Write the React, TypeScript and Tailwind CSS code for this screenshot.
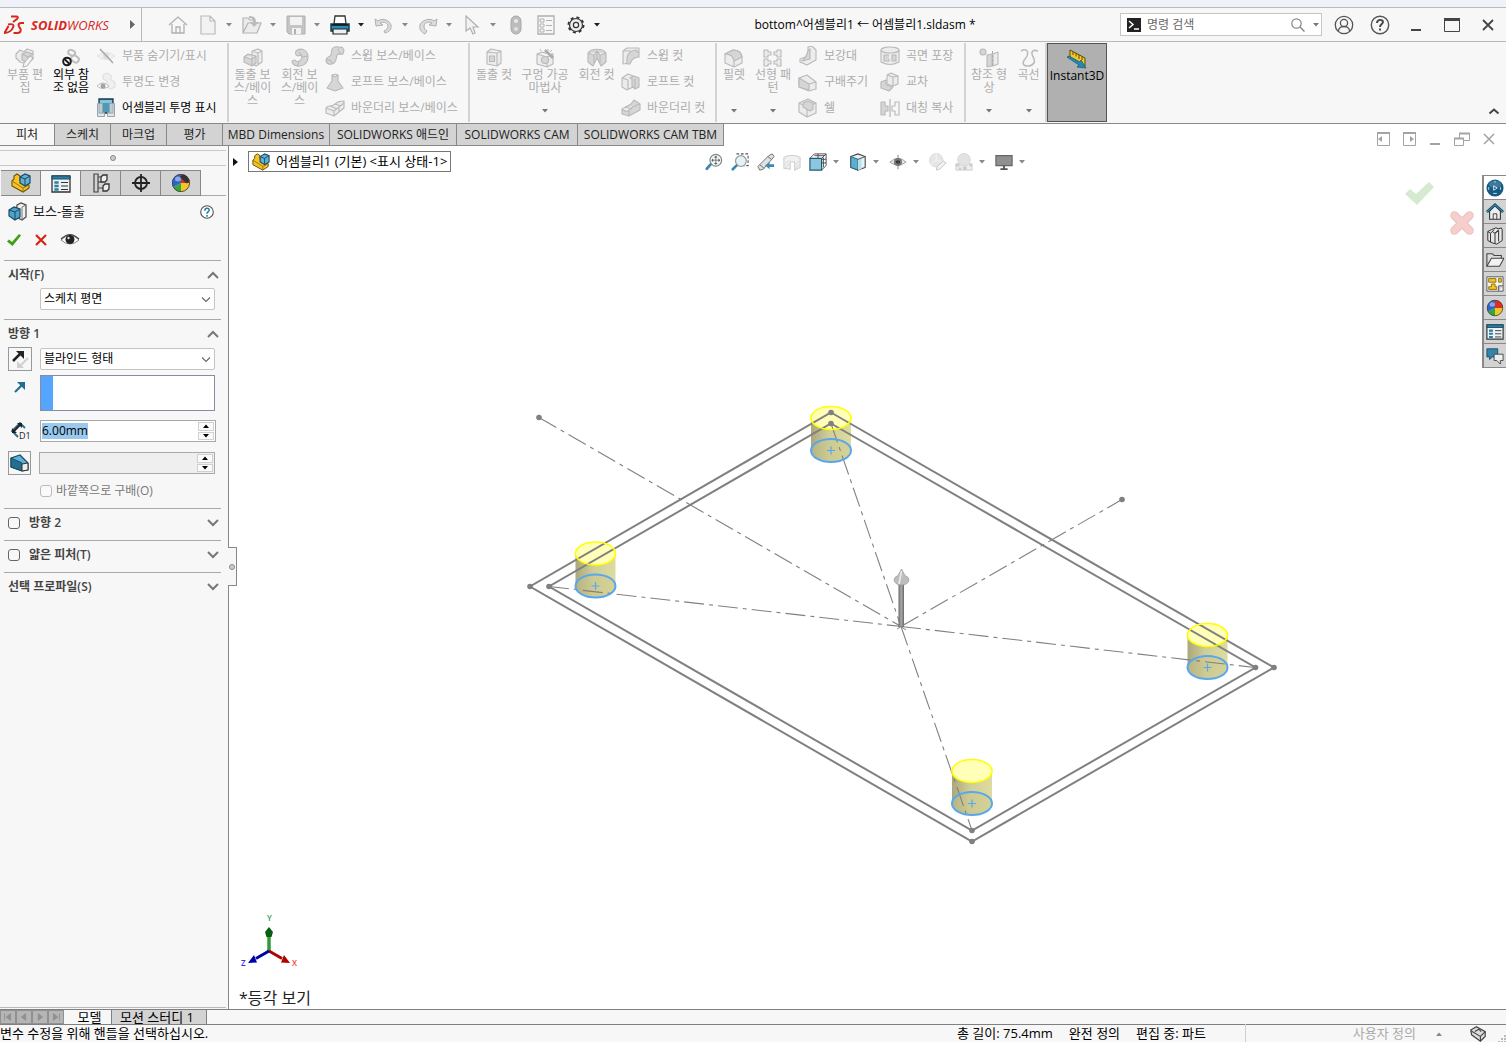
import React, { useEffect, useRef, useState } from "react";

type IconProps = { children: React.ReactNode; className?: string; box?: string };

function Icon({ children, className = "h-5 w-5", box = "0 0 20 20" }: IconProps) {
  return (
    <svg viewBox={box} className={`shrink-0 ${className}`} fill="none" aria-hidden="true">
      {children}
    </svg>
  );
}

function Caret({ className = "text-[#777]" }: { className?: string }) {
  return (
    <svg viewBox="0 0 6 4" className={`h-1 w-1.5 shrink-0 ${className}`} aria-hidden="true">
      <path d="M0 0h6L3 3.6z" fill="currentColor" />
    </svg>
  );
}

// Disabled ribbon icons are all drawn in the same two greys
const off = { stroke: "#b9b9b9", strokeWidth: 1.1, fill: "#ececec", strokeLinejoin: "round" as const };
const offDark = { ...off, fill: "#d6d6d6" };

const ribbon = {
  editPart: (
    <>
      <path {...off} d="M1 6l4-4 4 2 3-3 6 2v8l-6 5-7-2-4-4z" />
      <path {...offDark} d="M7 6l5-2 6 2-5 3zM7 6v6l6 3V9" />
      <path {...off} fill="#f7f7f7" d="M15 8l3 2-6 8-4 1 1-4z" />
    </>
  ),
  noRefs: (
    <>
      <g stroke="#bdbdbd" strokeWidth="2">
        <rect x="7" y="2" width="7" height="5" rx="2.5" transform="rotate(25 10 5)" />
        <rect x="10" y="8" width="8" height="6" rx="3" transform="rotate(35 14 11)" />
      </g>
      <circle cx="6" cy="13.500" r="3.800" stroke="#1d1d1d" strokeWidth="2" fill="#fff" />
      <path d="M3.500 11l5 5" stroke="#1d1d1d" strokeWidth="2" />
    </>
  ),
  hideShow: (
    <>
      <path d="M1 10q9-7 18 0-9 7-18 0" stroke="#e2e2e2" fill="#f1f1f1" />
      <circle cx="10" cy="10" r="3" fill="#dedede" />
      <path d="M4 3l13 14" stroke="#a8a8a8" strokeWidth="1.500" />
    </>
  ),
  transparency: (
    <>
      <path d="M7 3l4-2 4 2v5l4 2v5l-4 2-4-2V9L7 7z" stroke="#dcdcdc" fill="#efefef" />
      <path d="M1 14q6-6 12 0-6 5-12 0" stroke="#bcbcbc" fill="#fff" />
      <circle cx="7" cy="14" r="2.500" fill="#a3a3a3" />
    </>
  ),
  asmTransparency: (
    <>
      <path d="M3 1h14v14H3z" fill="#4d9ab8" stroke="#173c4d" strokeWidth="1.300" />
      <path d="M4 2h12v3H4z" fill="#86c3dc" />
      <path d="M1.500 5.500h5v9h2v4h-7zM18.500 5.500h-5v9h-2v4h7z" fill="#d9dfe2" fillOpacity=".75" stroke="#9aa3a8" />
    </>
  ),
  bossExtrude: (
    <>
      <path {...off} d="M9 3l6-2 4 2v11l-6 4-4-3zM15 5v12M9 3l6 2 4-2" />
      <path {...offDark} d="M1 9l4-3 8 2v7l-4 3-8-4zM1 9l8 2 4-3M9 11v7" />
    </>
  ),
  bossRevolve: (
    <path {...offDark} d="M6 3c5-4 12-1 12 6 0 6-5 10-11 9-4-1-5-3-5-5l3-1c2 3 6 1 7-2 0-3-3-3-4-2-2 0-3-2-2-5zM12 9l6-1M9 4l3 4M7 18l2-4" />
  ),
  sweep: (
    <path {...offDark} d="M1 14c0-3 4-3 5-5s-1-7 4-8c3-1 4 1 7 0l2 3-1 4c-4 1-5-1-6 1s0 6-3 8-8 2-8-3zM1 14c2-1 5 0 6 3M14 2c-1 2 0 4 2 6" />
  ),
  loft: <path {...offDark} d="M7 3c2-1 4-1 6 0v6l5 7-8 3-8-3 5-7zM7 3c2 2 4 2 6 0" />,
  boundary: (
    <>
      <path {...off} d="M1 10c2-4 5 0 9-4s5-2 9-3v7l-10 8-8-3z" />
      <path {...off} d="M1 10l8 3 10-8M9 13v5M5 8l7 3M10 6l6 2M14 10v4" />
    </>
  ),
  cutExtrude: (
    <>
      <path {...off} d="M3 4l4-3 10 2v12l-4 3-10-2zM3 4l10 1 4-2M13 5v13" />
      <path {...offDark} d="M5.500 8h5v5.500h-5z" />
    </>
  ),
  holeWizard: (
    <>
      <path {...off} d="M2 6l5-2 11 3v9l-6 3-10-3zM2 6l10 3 6-2M12 9v10" />
      <circle {...offDark} cx="10" cy="12" r="3.500" />
      <path d="M10 2l8 8" stroke="#ababab" strokeWidth="2.500" />
      <path d="M5 1l1 2M13 1v3M17 2l-2 2M19 6h-3" stroke="#bbb" />
    </>
  ),
  cutRevolve: (
    <path {...offDark} d="M1 5c3-5 15-5 18 0v9l-5 4-4-8-4 8-5-4zM1 5l6 2 3-4 3 4 6-2M7 7v10M13 7v10M10 3v7" />
  ),
  cutSweep: (
    <>
      <path {...off} d="M2 5l4-3h12v4l-8 6-1 5-7 1z" />
      <path {...offDark} d="M6 18V12q1-7 9-8l3 3v4q-7 0-9 7zM2 5h8" />
    </>
  ),
  cutLoft: (
    <>
      <path {...off} d="M1 6l6-4 5 2v11l-6 3-5-3zM1 6l6 2v10" />
      <path {...offDark} d="M9 6l4-2 5 2v9l-4 2-3-3V7z" />
      <path {...off} d="M14 7v10" />
    </>
  ),
  cutBoundary: (
    <>
      <path {...offDark} d="M1 11l9-5 3-4 6 4v6L8 18l-7-2z" />
      <path {...off} d="M1 11q5 4 7 1t11-6M8 12v6M4 9l7 2" />
    </>
  ),
  fillet: (
    <>
      <path {...off} d="M1 6l8-4q8 0 9 7v6l-8 4-9-4z" />
      <path {...offDark} d="M1 6l8-4q8 0 9 7l-8 4q-1-7-9-7z" />
      <path {...off} d="M10 13v6" />
    </>
  ),
  linearPattern: (
    <path
      {...off}
      d="M1 2h4v2h3v3H5v2H1zM18 2h-4v2h-3v3h3v2h4zM1 11h4v2h3v3H5v2H1zM18 11h-4v2h-3v3h3v2h4z"
    />
  ),
  rib: (
    <>
      <path {...off} d="M10 1l4-1 4 4v10l-9 5-7-3v-3l8-3z" />
      <path {...offDark} d="M12 3v10l-8 2q4-3 6-10z" />
    </>
  ),
  draft: (
    <>
      <path {...off} d="M1 6l8-3 9 7v7l-7 2-10-4z" />
      <path {...offDark} d="M1 6l10 6v6L1 15z" />
      <path {...off} d="M11 12l7-2" />
    </>
  ),
  shell: (
    <>
      <path {...off} d="M1 5l9-4 8 4v10l-9 4-8-5zM1 5l8 4 9-4M9 9v10" />
      <path {...offDark} d="M5 5l5-2 5 2v6l-3 2-7-4z" />
    </>
  ),
  wrap: (
    <>
      <path {...off} d="M1 4v12q9 5 18 0V4" />
      <ellipse {...off} cx="10" cy="4" rx="9" ry="3" />
      <path {...offDark} d="M9 9H4v6h5v-2M12 9h4v6h-4z" />
    </>
  ),
  intersect: (
    <>
      <path {...off} d="M7 3l4-2 7 3v8l-5 2-6-2z" />
      <path {...offDark} d="M1 10l5-2v5l7 2-4 4-8-3z" />
      <path {...off} d="M7 3l6 2v9M13 5l5-1" />
    </>
  ),
  mirror: (
    <>
      <path {...offDark} d="M1 4h4v4h3v5H5v4H1z" />
      <path {...off} fill="none" d="M19 4h-4v4h-3v5h3v4h4z" />
      <path d="M10 1v18" stroke="#b4b4b4" strokeWidth="1.200" />
    </>
  ),
  refGeometry: (
    <>
      <circle {...offDark} cx="4" cy="4" r="3" />
      <path {...offDark} d="M8 7l5-1v12l-5 1z" />
      <path {...off} d="M14 6l5-2v12l-5 2z" />
      <path d="M13.500 3v16" stroke="#aaa" strokeDasharray="3 1" />
    </>
  ),
  curve: (
    <path d="M2 3c5-3 8 0 6 5-2 4-6 6-3 9 3 2 8 1 10-2 2-4-3-7-2-11 1-2 3-2 6-1" stroke="#bbb" strokeWidth="1.600" />
  ),
  instant3d: (
    <>
      <path d="M3 1l15 8v8L3 8z" fill="#f6c928" stroke="#5a4708" />
      <path d="M6 3v3M9 4.500v3M12 6v4M15 8v3" stroke="#5a4708" />
      <path d="M0 8l2-1 11 6 1-2 5 8-9-1 2-2z" fill="#2389b5" stroke="#165c7b" strokeWidth=".8" />
    </>
  ),
};

type RibbonIcon = keyof typeof ribbon;

type BigButtonProps = { icon: RibbonIcon; lines: string[]; width: string; on?: boolean; menu?: boolean };

function BigButton({ icon, lines, width, on, menu }: BigButtonProps) {
  return (
    <button type="button" className={`flex shrink-0 flex-col items-center pt-1.5 pb-2.5 ${width}`}>
      <Icon>{ribbon[icon]}</Icon>
      <span className={`leading-[13px] whitespace-nowrap ${on ? "text-black" : "text-[#adadad]"}`}>
        {lines.map((line, i) => (
          <span key={i} className="block">
            {line}
          </span>
        ))}
      </span>
      {menu && <Caret className="mt-auto text-[#777]" />}
    </button>
  );
}

type Row = { icon: RibbonIcon; label: string; on?: boolean };

function RowList({ rows, width }: { rows: Row[]; width: string }) {
  return (
    <div className={`flex shrink-0 flex-col pt-px ${width}`}>
      {rows.map((row) => (
        <button
          key={row.label}
          type="button"
          className={`flex h-[26px] items-center gap-1.5 whitespace-nowrap ${
            row.on ? "text-black" : "text-[#adadad]"
          }`}
        >
          <Icon>{ribbon[row.icon]}</Icon>
          {row.label}
        </button>
      ))}
    </div>
  );
}

function Divider() {
  return <div className="my-px w-0.5 shrink-0 bg-[#d3d3d3]" />;
}

const quick = {
  home: <path d="M1 10l9-8 9 8M4 9v9h12V9M8 18v-6h4v6" stroke="#b0b0b0" strokeWidth="1.300" />,
  fresh: <path d="M3 1h9l5 5v13H3zM12 1v5h5" stroke="#b9b9b9" fill="#f2f2f2" strokeWidth="1.200" />,
  open: (
    <>
      <path d="M1 18V3h5l2 2h4M1 18L6 8h13l-4 10z" stroke="#b4b4b4" fill="#ececec" strokeWidth="1.200" />
      <path d="M7 1c5 0 7 2 7 6h3l-5 5-4-5h3c0-3-1-4-4-4z" fill="#bcbcbc" />
    </>
  ),
  save: (
    <>
      <path d="M1 1h18v18H3l-2-2z" fill="#c4c4c4" stroke="#b0b0b0" />
      <path d="M4 2h12v8H4zM6 13h9v6H6z" fill="#f2f2f2" />
      <path d="M8 14h2v5H8z" fill="#b0b0b0" />
    </>
  ),
  print: (
    <>
      <path d="M5 1h10l1 8H4z" fill="#fff" stroke="#333" strokeWidth="1.300" />
      <path d="M1 9h18v7H1z" fill="#2c8db3" stroke="#173c4d" strokeWidth="1.500" />
      <path d="M3 14h14v5H3z" fill="#e9f1f4" stroke="#222" strokeWidth="1.200" />
      <path d="M2 10h16" stroke="#111" strokeWidth="1.500" />
    </>
  ),
  undo: <path d="M1 4l1 7 7-1-3-2c4-2 8 0 8 3s-2 4-4 5l1 2c4-1 7-4 6-8S9 2 4 6z" stroke="#b0b0b0" fill="#dcdcdc" />,
  redo: <path d="M19 4l-1 7-7-1 3-2c-4-2-8 0-8 3s1 4 3 5l-2 3c-4-2-6-5-5-9S11 2 16 6z" stroke="#b0b0b0" fill="#dcdcdc" />,
  select: <path d="M4 1v15l4-3 3 6 2-1-2-6h5z" stroke="#b0b0b0" fill="#f2f2f2" strokeWidth="1.200" />,
  rebuild: (
    <>
      <rect x="5" y="1" width="10" height="18" rx="5" fill="#bdbdbd" stroke="#a9a9a9" />
      <circle cx="10" cy="6" r="2" fill="#e9e9e9" />
      <circle cx="10" cy="14" r="2" fill="#e0e0e0" />
    </>
  ),
  fileProps: (
    <>
      <path d="M2 1h16v18H2z" stroke="#b0b0b0" strokeWidth="1.300" />
      <path d="M4 4h4v3H4zM4 9h4v3H4zM4 14h4v3H4zM10 5.500h6M10 10.500h6M10 15.500h6" stroke="#b0b0b0" />
    </>
  ),
  options: (
    <>
      <circle cx="10" cy="10" r="7.600" stroke="#333" strokeWidth="1.800" strokeDasharray="3 3" />
      <circle cx="10" cy="10" r="6.500" stroke="#333" strokeWidth="1.200" fill="#ececec" />
      <circle cx="10" cy="10" r="2.600" stroke="#333" strokeWidth="1.200" fill="#f7f7f7" />
    </>
  ),
};

function Quick({ name, label, menu, dark }: { name: keyof typeof quick; label: string; menu?: boolean; dark?: boolean }) {
  return (
    <button type="button" aria-label={label} className={`flex shrink-0 items-center ${menu ? "w-11 gap-2" : "w-5"}`}>
      <Icon>{quick[name]}</Icon>
      {menu && <Caret className={dark ? "text-[#222]" : "text-[#888]"} />}
    </button>
  );
}

function TitleBar() {
  return (
    <header className="flex h-[34px] items-stretch border-b border-[#b9b9b9]">
      <div className="flex w-[142px] shrink-0 items-center border-r border-[#b9b9b9] pl-1">
        <Icon className="h-5 w-[21px]" box="0 0 21 20">
          <path
            d="M7 1.500h5q3 0 1 2.500l-4 3M4 9.500q7-1.500 5 3-2 5-8.500 5.500l4-7M20 8h-2.500q-4 0-2.500 3.500l1.500 2.500q1 4-3.500 4H9.500"
            stroke="#d9261c"
            strokeWidth="2"
          />
        </Icon>
        <span className="ml-1.5 text-[13px] leading-5 text-[#d9261c] italic">
          <b>SOLID</b>WORKS
        </span>
        <button type="button" aria-label="메뉴" className="mr-1.5 ml-auto">
          <svg viewBox="0 0 5 9" className="h-[9px] w-[5px]">
            <path d="M0 0l5 4.500L0 9z" fill="#666" />
          </svg>
        </button>
      </div>
      <div className="flex shrink-0 items-center pl-[26px]">
        <Quick name="home" label="홈" />
        <div className="w-2.5" />
        <Quick name="fresh" label="새로 만들기" menu />
        <Quick name="open" label="열기" menu />
        <Quick name="save" label="저장" menu />
        <Quick name="print" label="인쇄" menu dark />
        <Quick name="undo" label="실행 취소" menu />
        <Quick name="redo" label="다시 실행" menu />
        <Quick name="select" label="선택" menu />
        <div className="flex gap-2.5">
          <Quick name="rebuild" label="재생성" />
          <Quick name="fileProps" label="파일 속성" />
          <Quick name="options" label="옵션" menu dark />
        </div>
      </div>
      <h1 className="flex-1 self-center text-center text-[12px] whitespace-nowrap text-black">
        bottom^어셈블리1 ← 어셈블리1.sldasm *
      </h1>
      <div className="flex w-[202px] items-center self-center border border-[#c6c6c6] bg-white px-1.5">
        <Icon className="h-3.5 w-3.5" box="0 0 14 14">
          <path d="M0 0h14v14H0z" fill="#222" />
          <path d="M2 3l4 3.500L2 10M7 11h5" stroke="#fff" strokeWidth="1.500" />
        </Icon>
        <input
          aria-label="명령 검색"
          placeholder="명령 검색"
          className="h-[21px] min-w-0 flex-1 px-1.5 text-[12px] outline-none placeholder:text-[#666]"
        />
        <Icon className="h-3.5 w-3.5" box="0 0 14 14">
          <circle cx="5.500" cy="5.500" r="4.700" stroke="#888" strokeWidth="1.200" />
          <path d="M9 9l4.500 4.500" stroke="#888" strokeWidth="1.500" />
        </Icon>
        <Caret className="ml-2 -mr-1 text-[#777]" />
      </div>
      <div className="flex items-center gap-4 pr-2 pl-3">
        <button type="button" aria-label="로그인">
          <Icon>
            <g stroke="#555" strokeWidth="1.300">
              <circle cx="10" cy="10" r="8.700" />
              <circle cx="10" cy="8" r="3.600" />
              <path d="M4.500 16c0-6 11-6 11 0" />
            </g>
          </Icon>
        </button>
        <button type="button" aria-label="도움말">
          <Icon>
            <circle cx="10" cy="10" r="8.700" stroke="#555" strokeWidth="1.400" />
            <path d="M7 8c0-4 6-4 6-1 0 2-3 2-3 5M10 13.500v2" stroke="#444" strokeWidth="1.900" />
          </Icon>
        </button>
        <button type="button" aria-label="최소화">
          <Icon>
            <path d="M5 15h10" stroke="#444" strokeWidth="2" />
          </Icon>
        </button>
        <button type="button" aria-label="최대화">
          <Icon>
            <path d="M2.500 3.500h15v13h-15z" stroke="#444" />
            <path d="M2 4.500h16" stroke="#444" strokeWidth="3" />
          </Icon>
        </button>
        <button type="button" aria-label="닫기">
          <Icon>
            <path d="M5 5l10 10M15 5L5 15" stroke="#444" strokeWidth="1.800" />
          </Icon>
        </button>
      </div>
    </header>
  );
}

function Ribbon() {
  return (
    <div className="flex h-[82px] items-stretch border-b border-[#888] text-[12px]">
      <BigButton icon="editPart" lines={["부품 편", "집"]} width="w-[50px]" />
      <BigButton icon="noRefs" lines={["외부 참", "조 없음"]} width="w-[42px]" on />
      <RowList
        width="w-[135px] pl-1"
        rows={[
          { icon: "hideShow", label: "부품 숨기기/표시" },
          { icon: "transparency", label: "투명도 변경" },
          { icon: "asmTransparency", label: "어셈블리 투명 표시", on: true },
        ]}
      />
      <Divider />
      <BigButton icon="bossExtrude" lines={["돌출 보", "스/베이", "스"]} width="w-[47px]" />
      <BigButton icon="bossRevolve" lines={["회전 보", "스/베이", "스"]} width="w-[47px]" />
      <RowList
        width="w-[145px] pl-0.5"
        rows={[
          { icon: "sweep", label: "스윕 보스/베이스" },
          { icon: "loft", label: "로프트 보스/베이스" },
          { icon: "boundary", label: "바운더리 보스/베이스" },
        ]}
      />
      <Divider />
      <BigButton icon="cutExtrude" lines={["돌출 컷"]} width="w-12" />
      <BigButton icon="holeWizard" lines={["구멍 가공", "마법사"]} width="w-[54px]" menu />
      <BigButton icon="cutRevolve" lines={["회전 컷"]} width="w-[49px]" />
      <RowList
        width="w-[94px]"
        rows={[
          { icon: "cutSweep", label: "스윕 컷" },
          { icon: "cutLoft", label: "로프트 컷" },
          { icon: "cutBoundary", label: "바운더리 컷" },
        ]}
      />
      <Divider />
      <BigButton icon="fillet" lines={["필렛"]} width="w-[34px]" menu />
      <BigButton icon="linearPattern" lines={["선형 패", "턴"]} width="w-[44px]" menu />
      <RowList
        width="w-[85px] pl-[3px]"
        rows={[
          { icon: "rib", label: "보강대" },
          { icon: "draft", label: "구배주기" },
          { icon: "shell", label: "쉘" },
        ]}
      />
      <RowList
        width="w-[84px]"
        rows={[
          { icon: "wrap", label: "곡면 포장" },
          { icon: "intersect", label: "교차" },
          { icon: "mirror", label: "대칭 복사" },
        ]}
      />
      <Divider />
      <BigButton icon="refGeometry" lines={["참조 형", "상"]} width="w-[46px]" menu />
      <BigButton icon="curve" lines={["곡선"]} width="w-[33px]" menu />
      <Divider />
      <div className="my-px flex bg-[#b0b0b0] ring-1 ring-[#555] ring-inset">
        <BigButton icon="instant3d" lines={["Instant3D"]} width="w-[60px]" on />
      </div>
      <button type="button" aria-label="리본 접기" className="mr-1.5 mb-2 ml-auto self-end">
        <Icon className="h-2 w-3" box="0 0 12 8">
          <path d="M1.500 6.500L6 2.500l4.500 4" stroke="#444" strokeWidth="2" />
        </Icon>
      </button>
    </div>
  );
}

const commandTabs = [
  { label: "피처", width: "w-[55px]" },
  { label: "스케치", width: "w-14" },
  { label: "마크업", width: "w-14" },
  { label: "평가", width: "w-14" },
  { label: "MBD Dimensions", width: "w-[107px]" },
  { label: "SOLIDWORKS 애드인", width: "w-[127px]" },
  { label: "SOLIDWORKS CAM", width: "w-[121px]" },
  { label: "SOLIDWORKS CAM TBM", width: "w-[146px]" },
];

function CommandTabs() {
  return (
    <div className="flex h-[22px] justify-between">
      <nav className="flex text-[12px] leading-[21px] whitespace-nowrap text-[#222]">
        {commandTabs.map((tab, i) => (
          <button
            key={tab.label}
            type="button"
            className={`shrink-0 border-r border-b border-[#888] text-center ${tab.width} ${
              i === 0 ? "bg-[#f7f7f7]" : "bg-[#d3d3d3]"
            }`}
          >
            {tab.label}
          </button>
        ))}
      </nav>
      <div className="flex items-end gap-3 pr-2.5 text-[#a3a3a3]">
        <button type="button" aria-label="왼쪽 창">
          <Icon className="h-3.5 w-3.5" box="0 0 14 14">
            <path d="M1.500 .5h12v13h-12z" stroke="currentColor" />
            <path d="M1 1h13" stroke="currentColor" strokeWidth="2" />
            <path d="M6 4v6L2 7z" fill="currentColor" />
          </Icon>
        </button>
        <button type="button" aria-label="오른쪽 창">
          <Icon className="h-3.5 w-3.5" box="0 0 14 14">
            <path d="M1.500 .5h12v13h-12z" stroke="currentColor" />
            <path d="M1 1h13" stroke="currentColor" strokeWidth="2" />
            <path d="M8 4v6l4-3z" fill="currentColor" />
          </Icon>
        </button>
        <button type="button" aria-label="문서 최소화">
          <Icon className="h-3.5 w-3.5" box="0 0 14 14">
            <path d="M2 12h10" stroke="currentColor" strokeWidth="2" />
          </Icon>
        </button>
        <button type="button" aria-label="문서 복원">
          <Icon className="h-3.5 w-4" box="0 0 16 14">
            <path d="M.5 6.500h9v7h-9zM5.500 6V1.500h10v7H10" stroke="currentColor" />
            <path d="M0 6.500h10M5 1.500h11" stroke="currentColor" strokeWidth="2" />
          </Icon>
        </button>
        <button type="button" aria-label="문서 닫기">
          <Icon className="h-3.5 w-3.5" box="0 0 14 14">
            <path d="M2 2l10 10M12 2L2 12" stroke="currentColor" strokeWidth="1.500" />
          </Icon>
        </button>
      </div>
    </div>
  );
}

const assembly = (
  <>
    <path d="M1 8l2-2V3l3-2 3 2v4l9 5v3l-6 4L1 13z" fill="#f7c325" stroke="#6b5208" strokeWidth="1.100" />
    <path d="M1 8l11 7v4M12 15l6-3" stroke="#9a7609" />
    <path d="M9 4l5-3 5 2v7l-5 3-5-3z" fill="#62b0d3" stroke="#164b63" strokeWidth="1.200" />
    <path d="M9 4l5 2v7M14 6l5-3" stroke="#164b63" />
  </>
);

const appearance = (
  <>
    <path d="M10 10V1a9 9 0 0 1 9 9z" fill="#dd3025" />
    <path d="M10 10h9a9 9 0 0 1-9 9z" fill="#f2c52a" />
    <path d="M10 10v9A9 9 0 0 1 2 14z" fill="#35a63c" />
    <path d="M10 10L2 14A9 9 0 0 1 10 1z" fill="#2c63d0" />
    <circle cx="10" cy="10" r="8.600" stroke="#444" strokeWidth=".9" />
    <ellipse cx="7" cy="6" rx="3" ry="2.500" fill="#fff" opacity=".45" />
  </>
);

const listSheet = (
  <>
    <path d="M1 2h18v16H1z" fill="#eef4f6" stroke="#333" strokeWidth="1.300" />
    <path d="M1 2h18v3H1z" fill="#2a7fa3" stroke="#1b4d63" />
    <path d="M4 8h3v1H4zM4 11.500h3v1H4zM4 15h3v1H4z" stroke="#2a7fa3" strokeWidth="1.300" />
    <path d="M10 8.500h7M10 12h7M10 15.500h7" stroke="#333" />
  </>
);

const managerTabs = [
  { label: "트리", art: assembly },
  { label: "속성", art: listSheet },
  {
    label: "설정",
    art: (
      <>
        <path d="M3 1h4v18H3zM7 4h4M7 15h5" stroke="#444" strokeWidth="1.200" />
        <path d="M10 4l2-2h4v5l-2 2h-4zM12 13l2-2h4v5l-2 2h-4z" stroke="#333" strokeWidth="1.300" fill="#eee" />
        <path d="M7 9h3" stroke="#333" />
      </>
    ),
  },
  {
    label: "치수",
    art: (
      <>
        <circle cx="10" cy="10" r="6" stroke="#222" strokeWidth="1.800" />
        <path d="M10 1v18M1 10h18" stroke="#222" strokeWidth="1.800" />
      </>
    ),
  },
  {
    label: "표시",
    art: (
      <>
        {appearance}
        <path d="M9 4q2-3 5-2 4 2 4 6-1 3-3 2z" fill="#333" />
      </>
    ),
  },
];

function Chevron({ up }: { up?: boolean }) {
  return (
    <Icon className="h-2 w-3" box="0 0 12 8">
      <path d={up ? "M1 7l5-5 5 5" : "M1 1l5 5 5-5"} stroke="#777" strokeWidth="2" />
    </Icon>
  );
}

function Combo({ id, label, value }: { id: string; label: string; value: string }) {
  return (
    <div className="relative h-[22px] flex-1">
      <label htmlFor={id} className="sr-only">
        {label}
      </label>
      <select
        id={id}
        className="h-full w-full appearance-none rounded-xs border border-[#c4c4c4] bg-white px-[3px] text-[12px] leading-normal text-black"
      >
        <option>{value}</option>
      </select>
      <Icon className="pointer-events-none absolute top-2 right-1 h-2 w-2.5" box="0 0 10 8">
        <path d="M1 1.500l4 4 4-4" stroke="#666" strokeWidth="1.100" />
      </Icon>
    </div>
  );
}

function Stepper({ label, value, disabled }: { label: string; value: string; disabled?: boolean }) {
  const ref = useRef<HTMLInputElement>(null);
  const [text, setText] = useState(value);

  // the depth is ready to be typed over as soon as the panel opens
  useEffect(() => {
    if (!disabled) {
      ref.current?.focus();
      ref.current?.select();
    }
  }, [disabled]);

  return (
    <div className={`flex h-[22px] flex-1 border border-[#a9a9a9] ${disabled ? "bg-[#efefef]" : "bg-white"}`}>
      <input
        ref={ref}
        aria-label={label}
        disabled={disabled}
        value={text}
        onChange={(e) => setText(e.target.value)}
        className="min-w-0 flex-1 px-px text-[12px] leading-4 text-black outline-none selection:bg-[#99c9ef] selection:text-black"
      />
      <div className="flex w-[18px] flex-col gap-px p-px">
        <button type="button" aria-label="증가" className="flex flex-1 items-center justify-center border border-[#d0d0d0] bg-[#fafafa]">
          <Caret className="rotate-180 text-black" />
        </button>
        <button type="button" aria-label="감소" className="flex flex-1 items-center justify-center border border-[#d0d0d0] bg-[#fafafa]">
          <Caret className="text-black" />
        </button>
      </div>
    </div>
  );
}

type SectionProps = { title: string; open?: boolean; check?: boolean; children?: React.ReactNode };

function Section({ title, open, check, children }: SectionProps) {
  return (
    <section className="mr-[7px] ml-1 border-t border-[#a9a9a9] pr-1.5 pl-1">
      <div className="-mr-1 flex h-[27px] items-center justify-between">
        {check ? (
          <label className="flex items-center gap-[9px] font-semibold text-[#444]">
            <input type="checkbox" className="h-3 w-3 appearance-none rounded-[3px] border border-[#666] bg-[#f7f7f7]" />
            {title}
          </label>
        ) : (
          <h2 className="font-semibold text-[#444]">{title}</h2>
        )}
        <button type="button" aria-label={`${title} 펼치기`}>
          <Chevron up={open} />
        </button>
      </div>
      {children}
    </section>
  );
}

function PropertyPanel() {
  return (
    <aside className="relative flex w-[229px] shrink-0 flex-col border-r border-[#888] bg-[#f7f7f7] text-[12px]">
      <div className="mt-1 mr-0.5 flex h-4 items-center justify-center border-y border-[#c9c9c9]">
        <span className="h-1.5 w-1.5 rounded-full border border-[#888] bg-[#ccc]" />
      </div>
      <div className="mt-1 flex h-[26px] pl-px">
        {managerTabs.map((tab, i) => (
          <button
            key={tab.label}
            type="button"
            aria-label={tab.label}
            className={`flex w-10 items-center justify-center border-t border-r border-[#888] ${
              i === 1 ? "" : "border-b bg-[#d3d3d3]"
            }`}
          >
            <Icon>{tab.art}</Icon>
          </button>
        ))}
        <div className="mr-0.5 flex-1 border-b border-[#a9a9a9]" />
      </div>
      <div className="flex h-8 items-center gap-[5px] pr-3.5 pl-2">
        <Icon>
          <path d="M9 3l4-2 5 2v12l-4 3-6-3z" fill="#f1f1f1" stroke="#444" strokeWidth="1.200" />
          <path d="M14 5v13M14 5l4-2" stroke="#777" />
          <path d="M1 8l5-3 6 2v8l-5 3-6-4z" fill="#4fa3c9" stroke="#164b63" strokeWidth="1.200" />
          <path d="M1 8l6 2v8M7 10l5-3" stroke="#164b63" />
        </Icon>
        <h1 className="flex-1 text-[13px] text-[#222]">보스-돌출</h1>
        <button type="button" aria-label="도움말">
          <Icon className="h-3.5 w-3.5" box="0 0 16 16">
            <circle cx="8" cy="8" r="7.200" stroke="#555" strokeWidth="1.300" fill="#fff" />
            <path d="M5.500 6.500c0-3.500 5-3.500 5-.8C10.500 7.500 8 7.500 8 10M8 11.500v1.800" stroke="#2a7fa3" strokeWidth="1.800" />
          </Icon>
        </button>
      </div>
      <div className="mb-2 flex h-6 items-center gap-3 pl-1.5">
        <button type="button" aria-label="확인">
          <Icon className="h-4 w-4" box="0 0 16 16">
            <path d="M1 9.500l2-2L6 10l7-8 2 1.500L6.500 14z" fill="#3fa012" />
          </Icon>
        </button>
        <button type="button" aria-label="취소">
          <Icon className="h-3.5 w-3.5" box="0 0 14 14">
            <path d="M2 2l10 10M12 2L2 12" stroke="#d92410" strokeWidth="2.200" />
          </Icon>
        </button>
        <button type="button" aria-label="미리보기">
          <Icon>
            <path d="M1 10q9-9 18 0-9 8-18 0" fill="#fff" stroke="#888" />
            <path d="M1 9q9-9 18 0" stroke="#444" strokeWidth="1.200" />
            <circle cx="10" cy="9.500" r="4.500" fill="#222" />
            <circle cx="8.500" cy="8" r="1.200" fill="#ddd" />
          </Icon>
        </button>
      </div>

      <Section title="시작(F)" open>
        <div className="flex pb-[9px] pl-8">
          <Combo id="start" label="시작" value="스케치 평면" />
        </div>
      </Section>

      <Section title="방향 1" open>
        <div className="flex flex-col gap-2 pb-[9px]">
          <div className="flex items-center gap-2">
            <button type="button" aria-label="반대 방향" className="flex h-6 w-6 items-center justify-center border border-[#999]">
              <Icon>
                <path d="M18 9l-8 8" stroke="#d0d0d0" strokeWidth="2" />
                <path d="M7 12v7h7z" fill="#d0d0d0" />
                <path d="M3 12l7-7" stroke="#222" strokeWidth="2.500" />
                <path d="M6 2h8v8z" fill="#222" />
              </Icon>
            </button>
            <Combo id="end" label="방향 1" value="블라인드 형태" />
          </div>
          <div className="-mt-1 flex items-start gap-2">
            <div className="flex h-6 w-6 items-center justify-center">
              <Icon className="h-3.5 w-3.5" box="0 0 14 14">
                <path d="M2 12l7-7" stroke="#1f6f92" strokeWidth="2.200" />
                <path d="M4 2h8v8z" fill="#1f6f92" />
              </Icon>
            </div>
            <div role="listbox" aria-label="돌출 방향" className="flex h-9 flex-1 border border-[#8a8aa5] bg-white">
              <div className="w-3 bg-[#55a5ff]" />
            </div>
          </div>
          <div className="flex items-center gap-2">
            <Icon className="h-6 w-6" box="0 0 24 24">
              <path d="M10 18L4 12l8-8 5 5" stroke="#1f6f92" strokeWidth="1.800" />
              <path d="M6 12l6-6" stroke="#222" strokeWidth="1.800" />
              <path d="M9 4h5v5zM4 9v5h5z" fill="#222" />
              <text x="11" y="20" fontSize="9" fill="#222" stroke="none">
                D1
              </text>
            </Icon>
            <Stepper label="깊이" value="6.00mm" />
          </div>
          <div className="flex items-center gap-2">
            <button type="button" aria-label="구배" className="flex h-6 w-6 items-center justify-center border border-[#999]">
              <Icon>
                <path d="M1 5l9-3 8 8v7l-6 1L1 14z" fill="#5eb2d5" stroke="#164b63" strokeWidth="1.200" />
                <path d="M1 5l11 5v8L1 14z" fill="#246f90" stroke="#164b63" />
                <path d="M12 11l6-1v7l-6 1z" fill="#eee" stroke="#333" />
              </Icon>
            </button>
            <Stepper label="구배 각도" value="" disabled />
          </div>
          <label className="flex h-4 items-center gap-1 pl-8 text-[#777]">
            <input type="checkbox" disabled className="h-3 w-3 appearance-none rounded-[3px] border border-[#bbb] bg-[#fafafa]" />
            바깥쪽으로 구배(O)
          </label>
        </div>
      </Section>

      <div className="flex flex-col gap-1">
        <Section title="방향 2" check />
        <Section title="얇은 피처(T)" check />
        <Section title="선택 프로파일(S)" />
      </div>
      <div className="mt-auto mr-0.5 border-t border-[#bbb] pb-px" />

      {/* splitter handle sticks out over the graphics area */}
      <div className="absolute top-[401px] -right-[9px] z-10 flex h-[39px] w-[9px] items-center justify-center border border-l-0 border-[#888] bg-[#f7f7f7]">
        <span className="h-1.5 w-1.5 rounded-full border border-[#888] bg-[#ccc]" />
      </div>
    </aside>
  );
}

const viewTools = [
  {
    label: "전체 보기",
    art: (
      <>
        <circle cx="12" cy="8" r="6.500" fill="#eef6fa" stroke="#888" strokeWidth="1.300" />
        <path d="M6 13l-4 4.500" stroke="#3d87aa" strokeWidth="3" strokeLinecap="round" />
        <path d="M12 4v8M8 8h8" stroke="#777" />
        <path d="M12 3l2 2h-4zM12 13l2-2h-4zM7 8l2-2v4zM17 8l-2-2v4z" fill="#555" />
      </>
    ),
  },
  {
    label: "영역 확대",
    art: (
      <>
        <path d="M6 1h13v13h-5" stroke="#555" strokeWidth="1.200" strokeDasharray="3 2" />
        <circle cx="11" cy="9" r="6" fill="#e4f1f7" stroke="#999" strokeWidth="1.300" />
        <path d="M6 14l-4 4" stroke="#3d87aa" strokeWidth="3" strokeLinecap="round" />
      </>
    ),
  },
  {
    label: "이전 뷰",
    art: (
      <>
        <path d="M1 15L13 3l4-2 2 3L7 18l-4 1z" fill="#e2e2e2" stroke="#666" />
        <path d="M3 13l5 4M12 4l4 3" stroke="#666" />
        <path d="M9 14l5-4v2.500h5v3h-5V18z" fill="#3b8bb0" />
      </>
    ),
  },
  {
    label: "단면도",
    art: (
      <>
        <path d="M1 5q9-5 18 0v11l-6 3v-9H8v8l-7-1z" fill="#f0f0f0" stroke="#cfcfcf" strokeWidth="1.200" />
        <path d="M2 13l5-5M2 17l5-5M14 13l4-4M14 17l4-4" stroke="#d2d2d2" />
      </>
    ),
  },
  {
    label: "뷰 방향",
    menu: true,
    art: (
      <>
        <path d="M6 1h13v13l-5 5M1 6l5-5M14 6l5-5M10 1v5M6 3h11M16 5v11M19 7h-5M19 11h-5" stroke="#444" />
        <path d="M1 6h13v13H1z" fill="#8dc6e0" stroke="#235a73" strokeWidth="1.300" />
      </>
    ),
  },
  {
    label: "표시 유형",
    menu: true,
    art: (
      <>
        <path d="M2 4l8-3 8 3v12l-8 3-8-3z" fill="#e6f3f9" stroke="#444" strokeWidth="1.200" />
        <path d="M2 4l8 3v12l-8-3z" fill="#5fadcf" stroke="#2d5f75" />
        <path d="M10 7l4-1v12l-4 1z" fill="#bcdfee" />
        <path d="M10 7l8-3" stroke="#444" />
      </>
    ),
  },
  {
    label: "숨기기",
    menu: true,
    art: (
      <>
        <path d="M1 10q9-8 18 0-9 7-18 0" fill="#e9e9e9" stroke="#999" />
        <circle cx="10" cy="10" r="4.500" fill="#777" />
        <circle cx="10" cy="10" r="2" fill="#111" />
        <path d="M10 2v16" stroke="#777" />
      </>
    ),
  },
  {
    label: "표현 편집",
    art: (
      <>
        <circle cx="8" cy="8" r="7.500" fill="#e6e6e6" stroke="#dadada" />
        <path d="M8 8V.5M8 8l7 2M8 8l-6 5" stroke="#f5f5f5" />
        <path d="M16 9l3 2-7 7-4 1 1-4z" fill="#f2f2f2" stroke="#c5c5c5" />
      </>
    ),
  },
  {
    label: "화면 적용",
    menu: true,
    art: (
      <>
        <path d="M1 12h18v7H1z" fill="#eee" stroke="#ccc" />
        <path d="M1 12h4v3H1zM9 15h4v4H9zM16 12h3v3h-3zM4 16h3v3H4z" fill="#ccc" />
        <circle cx="10" cy="7.500" r="7" fill="#e3e3e3" stroke="#d5d5d5" />
      </>
    ),
  },
  {
    label: "뷰 설정",
    menu: true,
    art: (
      <>
        <path d="M1 3h18v11H1z" fill="#909090" stroke="#666" strokeWidth="1.300" />
        <path d="M10 14v4M6 18h8" stroke="#555" strokeWidth="2" />
      </>
    ),
  },
];

const taskTabs = [
  {
    label: "3DEXPERIENCE",
    art: (
      <>
        <circle cx="10" cy="10" r="9.500" fill="#155a80" />
        <ellipse cx="10" cy="6" rx="7" ry="4" fill="#5e9abb" opacity=".5" />
        <path d="M8.500 7.500v5l4-2.500zM10 2v2M8 16h4M3 9v3M16 9v3" stroke="#d4e9f3" />
      </>
    ),
  },
  {
    label: "홈",
    art: (
      <>
        <path d="M4 9v9h12V9l-6-6z" fill="#eee" stroke="#333" strokeWidth="1.200" />
        <path d="M8 18v-6h4v6" stroke="#333" />
        <path d="M1 10l9-8 9 8" stroke="#174d66" strokeWidth="3" />
        <path d="M1 10l9-8 9 8" stroke="#4d9dc0" />
      </>
    ),
  },
  {
    label: "설계 라이브러리",
    art: (
      <path
        d="M2 5l4-2 5-2 3 1 3-1 1 2v12l-6 4-4-1-6-3zM2 5l3 2v10M5 7l4-4M7 5l3 2v11M10 7l4-4M14 4v12M10 7l4-3"
        fill="#e6e6e6"
        stroke="#333"
        strokeWidth="1.100"
      />
    ),
  },
  {
    label: "파일 탐색기",
    art: (
      <>
        <path d="M1 17V3h6l2 2h8v4" fill="#ddd" stroke="#444" strokeWidth="1.200" />
        <path d="M1 17L6 8h14l-5 9z" fill="#f2f2f2" stroke="#444" strokeWidth="1.200" />
      </>
    ),
  },
  {
    label: "뷰 팔레트",
    art: (
      <>
        <path d="M1 2h18v16H1z" fill="#f3f3f3" stroke="#555" />
        <path d="M3 4h8v4H3zM14 4h3v4h-3zM6 10h4v3h2v3H3v-3h3z" fill="#f2c52a" stroke="#8a6b0a" />
        <path d="M14 18v-6h5" stroke="#555" fill="#ccc" />
      </>
    ),
  },
  { label: "표현", art: appearance },
  { label: "사용자 정의 속성", art: listSheet },
  {
    label: "포럼",
    art: (
      <>
        <path d="M1 2h12v9H7l-3 3v-3H1z" fill="#3484a8" stroke="#194e66" />
        <path d="M9 8h10v7h-3v4l-4-4H9z" fill="#eee" stroke="#444" />
      </>
    ),
  },
];

const bosses = [
  [831, 418],
  [595.5, 553.5],
  [1207.5, 635],
  [972, 771],
];

const corners = [
  [831, 412.5],
  [1274, 667.5],
  [972, 841.5],
  [530, 586.5],
  [831, 423.5],
  [1255.5, 667.5],
  [972, 830.5],
  [549, 586.5],
  [539, 417.5],
  [1122, 499.5],
];

// Isometric sketch with the extrude preview on top
function Sketch() {
  return (
    <svg viewBox="229 146 1277 863" className="absolute inset-0 h-full w-full" role="img" aria-label="스케치">
      <defs>
        <linearGradient id="side">
          <stop offset="0" stopColor="#aaa77c" />
          <stop offset=".45" stopColor="#d0ce98" />
          <stop offset="1" stopColor="#dddc9e" />
        </linearGradient>
        <linearGradient id="shaft">
          <stop offset="0" stopColor="#666" />
          <stop offset=".5" stopColor="#aaa" />
          <stop offset="1" stopColor="#666" />
        </linearGradient>
      </defs>
      {bosses.map(([x, y]) => (
        <g key={x}>
          <path d={`M${x - 20} ${y}v32a20 11.500 0 0 0 40 0v-32z`} fill="url(#side)" />
          <ellipse cx={x} cy={y + 32} rx="20" ry="11.500" fill="#c9c68a" fillOpacity=".4" />
          <ellipse cx={x} cy={y} rx="20" ry="11.500" fill="#ffffb8" />
        </g>
      ))}
      <g fill="none" stroke="#808080" strokeWidth="2">
        <path d="M831 412.500L1274 667.500 972 841.500 530 586.500z" />
        <path d="M831 423.500L1255.500 667.500 972 830.500 549 586.500z" />
      </g>
      <g stroke="#808080" strokeWidth="1.100" strokeDasharray="20 5 4 5">
        <path d="M539 417.500L901 626.500" />
        <path d="M901 626.500L1122 499.500" />
        <path d="M549 586.500L901 626.500" />
        <path d="M901 626.500L1255 667.500" />
        <path d="M831 423.500L901 626.500" />
        <path d="M901 626.500L972 830.500" />
      </g>
      {corners.map(([x, y]) => (
        <circle key={`${x}-${y}`} cx={x} cy={y} r="2.800" fill="#808080" />
      ))}
      {bosses.map(([x, y]) => (
        <g key={x} fill="none">
          <ellipse cx={x} cy={y} rx="20" ry="11.500" stroke="#ffff00" strokeWidth="1.600" />
          <ellipse cx={x} cy={y + 32.500} rx="20" ry="11.500" stroke="#58a6f0" strokeWidth="2" />
          <path d={`M${x - 4} ${y + 32.500}h8M${x} ${y + 28.500}v8`} stroke="#58a6f0" strokeWidth="1.200" />
        </g>
      ))}
      <path d="M898.500 583h5.500v44h-5.500z" fill="url(#shaft)" />
      <path
        d="M901.500 569l3.500 6.500q4 1.500 4 4.500-1 5-7.500 5t-7.500-5q0-3 4-4.500z"
        fill="#bdbdbd"
        stroke="#9a9a9a"
        strokeWidth=".7"
      />
      <path d="M901.500 571l-2.500 13" stroke="#eee" strokeWidth="1.500" />
      <path d="M897 629l8-5M897 624l9 6" stroke="#888" />
      <g fontSize="8" fontWeight="600">
        <path d="M269 951V934" stroke="#2f9a3a" strokeWidth="3.500" />
        <path d="M269 927l4 5-1.500 5h-5l-1.500-5z" fill="#065f10" />
        <path d="M269 951l13 7.500" stroke="#b00000" strokeWidth="3" />
        <path d="M284 955l6 8-9-.5z" fill="#b00000" />
        <path d="M269 951l-13 7.500" stroke="#0000a8" strokeWidth="3" />
        <path d="M254 955l-6 8 9-.5z" fill="#0000a8" />
        <text x="267" y="921" fill="#2f9a3a">Y</text>
        <text x="292" y="966" fill="#f04040">X</text>
        <text x="241" y="966" fill="#3030e8">Z</text>
      </g>
    </svg>
  );
}

function Viewport() {
  return (
    <main className="relative flex min-w-0 flex-1 flex-col justify-between bg-white">
      <Sketch />
      <div className="relative grid grid-cols-[1fr_auto_1fr] items-center pt-[5px]">
        <div className="flex items-center gap-2.5 pl-1">
          <svg viewBox="0 0 5 8" className="h-2 w-[5px]" aria-hidden="true">
            <path d="M0 0l5 4-5 4z" fill="#111" />
          </svg>
          <button
            type="button"
            className="flex h-[21px] items-center gap-1.5 border border-[#777] bg-white px-[3px] text-[13px] whitespace-nowrap text-black"
          >
            <Icon className="h-[18px] w-[18px]">{assembly}</Icon>
            어셈블리1 (기본) &lt;표시 상태-1&gt;
          </button>
        </div>
        <div className="flex items-center gap-2 pr-1">
          {viewTools.map((tool) => (
            <button key={tool.label} type="button" aria-label={tool.label} className="flex items-center gap-1.5">
              <Icon className="h-[18px] w-[18px]">{tool.art}</Icon>
              {tool.menu && <Caret className="mr-0.5 text-[#888]" />}
            </button>
          ))}
        </div>
      </div>
      <p className="relative px-2.5 pb-px text-[16px] leading-5 text-[#222]">*등각 보기</p>

      {/* confirmation corner */}
      <div className="absolute top-9 right-8 flex">
        <button type="button" aria-label="확인" className="h-6">
          <Icon className="h-6 w-[29px]" box="0 0 29 24">
            <path d="M0 12l5-5 6 5L24 0l5 5-17 18z" fill="#d5ead0" />
          </Icon>
        </button>
        <button type="button" aria-label="취소" className="mt-[29px] ml-4 h-6">
          <Icon className="h-6 w-6" box="0 0 24 24">
            <path d="M4.500 4.500l15 15M19.500 4.500l-15 15" stroke="#e9c0c0" strokeWidth="8.500" strokeLinecap="round" />
            <path d="M4.500 4.500l15 15M19.500 4.500l-15 15" stroke="#f6cfcd" strokeWidth="6.500" strokeLinecap="round" />
          </Icon>
        </button>
      </div>

      <div className="absolute top-[29px] right-0 flex flex-col border-t border-l-2 border-[#888]">
        {taskTabs.map((tab, i) => (
          <button
            key={tab.label}
            type="button"
            aria-label={tab.label}
            className={`flex h-6 w-[22px] items-center justify-center border-b border-[#888] ${
              i === 0 ? "bg-white" : "bg-[#d3d3d3]"
            }`}
          >
            <Icon className="h-[18px] w-[18px]">{tab.art}</Icon>
          </button>
        ))}
      </div>
    </main>
  );
}

const players = [
  { label: "처음", d: "M3 3v8M10 3L5 7l5 4z" },
  { label: "이전", d: "M9 3L4 7l5 4z" },
  { label: "다음", d: "M5 3l5 4-5 4z" },
  { label: "마지막", d: "M11 3v8M4 3l5 4-5 4z" },
];

function Footer() {
  return (
    <footer className="text-[13px]">
      <div className="flex h-4 border-y border-[#808080] bg-[#f7f7f7] leading-[13px]">
        {players.map((p) => (
          <button key={p.label} type="button" aria-label={p.label} className="flex w-4 items-center justify-center border border-[#909090] bg-[#b5b5b5]">
            <Icon className="h-3 w-3" box="0 0 14 14">
              <path d={p.d} fill="#909090" stroke="#909090" />
            </Icon>
          </button>
        ))}
        <button type="button" className="w-[47px] pl-1 text-center">
          모델
        </button>
        <button type="button" className="border-x border-[#808080] bg-[#d3d3d3] pr-3 pl-2">
          모션 스터디 1
        </button>
      </div>
      <div className="flex h-[17px] items-center bg-[#f7f7f7] whitespace-nowrap text-black">
        <p className="flex-1">변수 수정을 위해 핸들을 선택하십시오.</p>
        <div className="flex w-72 gap-4">
          <span>총 길이: 75.4mm</span>
          <span>완전 정의</span>
          <span>편집 중: 파트</span>
        </div>
        <div className="flex w-[261px] items-center justify-end border-l border-[#d0d0d0] text-[#aaa]">
          <span>사용자 정의</span>
          <Caret className="ml-5 rotate-180 text-[#888]" />
          <Icon className="ml-7 h-4 w-4">
            <path d="M1 5l7-4 11 6v6l-6 6L2 11z" fill="#ddd" stroke="#444" strokeWidth="1.500" />
            <path d="M1 6l12 7 6-6M13 13v6M6 7l5-3 3 3" stroke="#444" strokeWidth="1.400" />
          </Icon>
          <Icon className="ml-3 h-2 w-2 self-end" box="0 0 8 8">
            <path d="M6 0h2v2H6zM3 3h2v2H3zM6 3h2v2H6zM0 6h2v2H0zM3 6h2v2H3zM6 6h2v2H6z" fill="#bbb" />
          </Icon>
        </div>
      </div>
    </footer>
  );
}

function App() {
  return (
    <div className="flex min-h-screen flex-col bg-white font-['Open_Sans','Noto_Sans_CJK_KR',sans-serif]">
      <div className="bg-[#f7f7f7]">
        <div className="h-2 border-b border-[#b9b9b9] bg-[#eff2f9]" />
        <TitleBar />
        <Ribbon />
      </div>
      <CommandTabs />
      <div className="flex flex-1">
        <PropertyPanel />
        <Viewport />
      </div>
      <Footer />
    </div>
  );
}

export default App;
